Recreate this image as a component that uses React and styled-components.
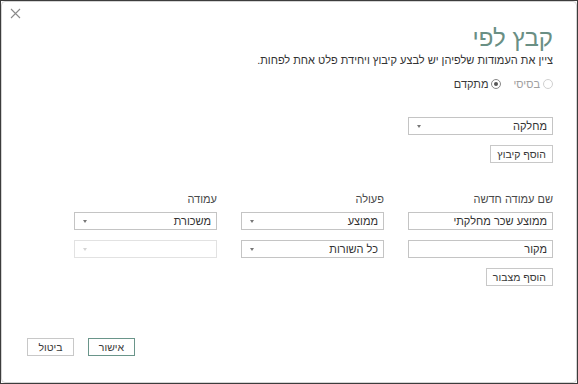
import React from 'react';
import styled, { createGlobalStyle } from 'styled-components';

const GlobalStyle = createGlobalStyle`
	html, body {
		margin: 0;
		padding: 0;
		background: #fff;
	}
	body {
		font-family: "Liberation Sans", "DejaVu Sans", sans-serif;
	}
`;

const Frame = styled.div`
	width: 578px;
	height: 384px;
	box-sizing: border-box;
	border: 1px solid #3c3c3c;
	background: #fff;
`;

const Window = styled.div`
	height: 100%;
	box-sizing: border-box;
	border: 1px solid #d4d4d4;
	border-radius: 4px;
	display: flex;
	flex-direction: column;
	direction: rtl;
	padding: 0 23px 0 25px;
	color: #3a3a3a;
	font-size: 11px;
`;

const TopBar = styled.div`
	display: flex;
	justify-content: flex-end;
	margin: 5px -17px 0 0;
	margin-left: -18px;
	height: 12px;
`;

const Close = styled.button`
	width: 12px;
	height: 12px;
	padding: 0;
	border: 0;
	background: none;
	display: flex;
	align-items: center;
	justify-content: center;
	cursor: pointer;
`;

const Title = styled.h1`
	margin: 6px 0 0 0;
	font-size: 24px;
	line-height: 26px;
	font-weight: 300;
	color: #6a8f84;
`;

const Subtitle = styled.p`
	margin: 1px 0 0 0;
	font-size: 11px;
	line-height: 16px;
	color: #333;
`;

const RadioRow = styled.div`
	display: flex;
	gap: 12px;
	margin-top: 9px;
	height: 14px;
	align-items: center;
`;

const RadioLabel = styled.label`
	display: flex;
	align-items: center;
	gap: 3px;
	font-size: 11px;
	color: ${(p) => (p.disabled ? '#a0a0a0' : '#3a3a3a')};
`;

const RadioDot = styled.span`
	width: 8px;
	height: 8px;
	border-radius: 50%;
	border: 1px solid ${(p) => (p.disabled ? '#d0d0d0' : '#888')};
	display: flex;
	align-items: center;
	justify-content: center;
	&::after {
		content: '';
		width: 4px;
		height: 4px;
		border-radius: 50%;
		background: ${(p) => (p.checked ? '#555' : 'transparent')};
	}
`;

const Section = styled.div`
	display: flex;
	flex-direction: column;
	align-items: flex-start;
	margin-top: ${(p) => p.top || 0}px;
`;

const Grid = styled.div`
	display: grid;
	grid-template-columns: 145px 143px 143px;
	column-gap: 24px;
	row-gap: 10px;
	align-items: end;
`;

const Label = styled.div`
	font-size: 11px;
	line-height: 14px;
	color: #4a4a4a;
	margin-bottom: -4px;
`;

const Field = styled.div`
	height: 18px;
	box-sizing: border-box;
	border: 1px solid ${(p) => (p.disabled ? '#e2e2e2' : '#c4c4c4')};
	background: #fff;
	display: flex;
	align-items: center;
	justify-content: space-between;
	padding: 0 5px 0 8px;
	font-size: 11px;
	color: #333;
	width: ${(p) => (p.wide ? '145px' : 'auto')};
`;

const Caret = styled.span`
	width: 0;
	height: 0;
	border-left: 2px solid transparent;
	border-right: 2px solid transparent;
	border-top: 3px solid ${(p) => (p.disabled ? '#d4d4d4' : '#777')};
	margin-top: 1px;
`;

const Button = styled.button`
	height: 18px;
	box-sizing: border-box;
	padding: 0 6px;
	background: #fff;
	border: 1px solid ${(p) => (p.primary ? '#6a958a' : '#c8c8c8')};
	font-family: inherit;
	font-size: 10.5px;
	color: #3a3a3a;
	cursor: pointer;
	min-width: ${(p) => p.minWidth || 0}px;
`;

const Footer = styled.div`
	margin-top: auto;
	margin-bottom: 26px;
	display: flex;
	justify-content: flex-end;
	gap: 14px;
	margin-left: 0;
`;

function Select({ value, disabled, wide }) {
	return (
		<Field disabled={disabled} wide={wide}>
			<span>{value}</span>
			<Caret disabled={disabled} />
		</Field>
	);
}

export default function App() {
	return (
		<>
			<GlobalStyle />
			<Frame>
				<Window>
					<TopBar>
						<Close aria-label="סגור">
							<svg width="11" height="11" viewBox="0 0 11 11">
								<path d="M1 1 L10 10 M10 1 L1 10" stroke="#8a8a8a" strokeWidth="1.1" fill="none" />
							</svg>
						</Close>
					</TopBar>
					<Title>קבץ לפי</Title>
					<Subtitle>ציין את העמודות שלפיהן יש לבצע קיבוץ ויחידת פלט אחת לפחות.</Subtitle>
					<RadioRow>
						<RadioLabel disabled>
							<RadioDot disabled />
							בסיסי
						</RadioLabel>
						<RadioLabel>
							<RadioDot checked />
							מתקדם
						</RadioLabel>
					</RadioRow>
					<Section top={26}>
						<Select value="מחלקה" wide />
						<Section top={10}>
							<Button minWidth={60}>הוסף קיבוץ</Button>
						</Section>
					</Section>
					<Section top={29}>
						<Grid>
							<Label>שם עמודה חדשה</Label>
							<Label>פעולה</Label>
							<Label>עמודה</Label>
							<Field>ממוצע שכר מחלקתי</Field>
							<Select value="ממוצע" />
							<Select value="משכורת" />
							<Field>מקור</Field>
							<Select value="כל השורות" />
							<Select value="" disabled />
						</Grid>
						<Section top={10}>
							<Button minWidth={62}>הוסף מצבור</Button>
						</Section>
					</Section>
					<Footer>
						<Button primary minWidth={47}>אישור</Button>
						<Button minWidth={47}>ביטול</Button>
					</Footer>
				</Window>
			</Frame>
		</>
	);
}
